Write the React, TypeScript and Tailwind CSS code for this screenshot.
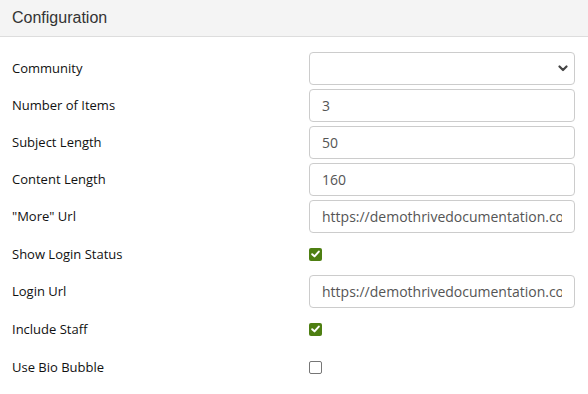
import React from "react";

type Field =
  | { label: string; kind: "select" }
  | { label: string; kind: "text"; value: string }
  | { label: string; kind: "check"; checked: boolean };

const fields: Field[] = [
  { label: "Community", kind: "select" },
  { label: "Number of Items", kind: "text", value: "3" },
  { label: "Subject Length", kind: "text", value: "50" },
  { label: "Content Length", kind: "text", value: "160" },
  { label: "\"More\" Url", kind: "text", value: "https://demothrivedocumentation.com/community" },
  { label: "Show Login Status", kind: "check", checked: true },
  { label: "Login Url", kind: "text", value: "https://demothrivedocumentation.com/login" },
  { label: "Include Staff", kind: "check", checked: true },
  { label: "Use Bio Bubble", kind: "check", checked: false },
];

const Check: React.FC<{ checked: boolean }> = ({ checked }) =>
  checked ? (
    <span className="flex h-[13px] w-[13px] items-center justify-center rounded-[2px] bg-[#4e7f12]">
      <svg width="9" height="8" viewBox="0 0 9 8" fill="none">
        <path d="M1.2 4.2 L3.5 6.4 L7.8 1.6" stroke="white" strokeWidth="2" strokeLinecap="round" strokeLinejoin="round" />
      </svg>
    </span>
  ) : (
    <span className="block h-[13px] w-[13px] rounded-[2px] border border-[#767676] bg-white" />
  );

const App: React.FC = () => {
  return (
    <div className="h-[394px] w-[588px] bg-white font-['Open_Sans',sans-serif] text-[#333]">
      <div className="flex h-[37px] items-center border-b border-[#ddd] bg-[#f4f4f4] px-3">
        <h1 className="font-['Liberation_Sans',Arial,sans-serif] text-[16px] text-[#333]">Configuration</h1>
      </div>
      <div className="flex flex-col gap-1 pl-3 pr-[13px] pt-[15px]">
        {fields.map((f) => (
          <div
            key={f.label}
            className={`grid grid-cols-[297px_1fr] items-center ${f.kind === "check" ? "h-[34px]" : "h-[33px]"}`}
          >
            <label className="pt-px text-[13px] font-medium text-[#111]">{f.label}</label>
            {f.kind === "select" && (
              <div className="flex h-[33px] items-center justify-end rounded-[4px] border border-[#ccc] bg-white pr-[6px]">
                <svg width="10" height="7" viewBox="0 0 10 7" fill="none">
                  <path d="M1.5 1.5 L5 5 L8.5 1.5" stroke="#444" strokeWidth="2.2" strokeLinecap="round" strokeLinejoin="round" />
                </svg>
              </div>
            )}
            {f.kind === "text" && (
              <div className="flex h-[33px] items-center overflow-hidden rounded-[4px] border border-[#ccc] bg-white pl-3 pr-[12px]">
                <span className="overflow-hidden whitespace-nowrap text-[14px] text-[#555]">{f.value}</span>
              </div>
            )}
            {f.kind === "check" && <Check checked={f.checked} />}
          </div>
        ))}
      </div>
    </div>
  );
};

export default App;
